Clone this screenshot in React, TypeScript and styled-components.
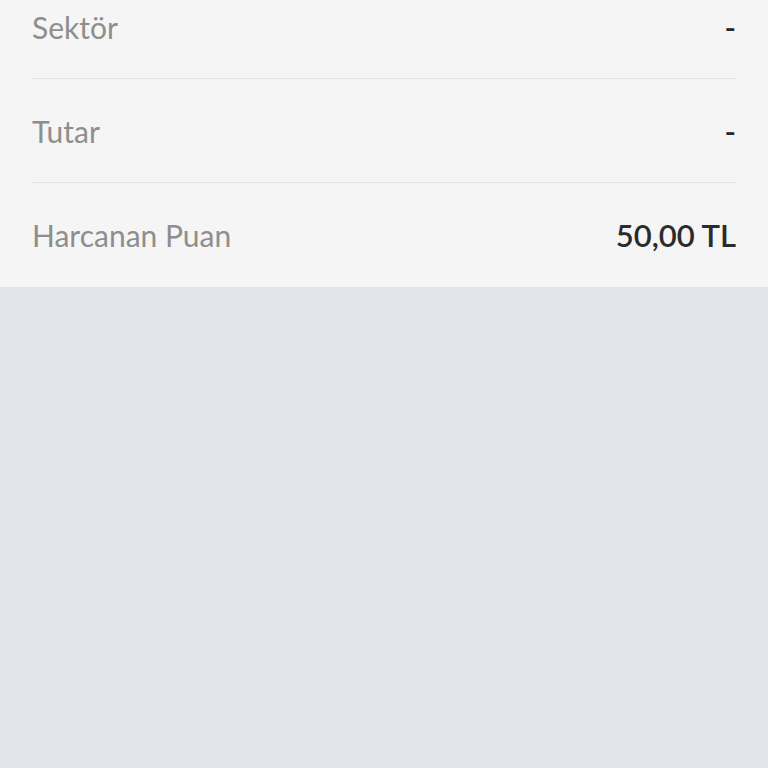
import styled, { createGlobalStyle } from "styled-components";

const GlobalStyle = createGlobalStyle`
  html, body {
    margin: 0;
    padding: 0;
    background-color: #e1e4e8;
  }
  body {
    font-family: Lato, "Open Sans", sans-serif;
  }
`;

const Page = styled.div`
  width: 768px;
  height: 768px;
  overflow: hidden;
  background-color: #e1e4e8;
`;

const DetailPanel = styled.div`
  background-color: #f5f5f5;
  padding: 0 32px;
  margin-top: -25px;
`;

const DetailRow = styled.div<{ $last?: boolean }>`
  display: flex;
  justify-content: space-between;
  align-items: center;
  height: ${({ $last }) => ($last ? "104px" : "103px")};
  border-bottom: ${({ $last }) => ($last ? "none" : "1px solid #e2e2e2")};
`;

const Label = styled.div`
  font: 400 30px Lato, sans-serif;
  color: #8e8e8e;
`;

const Value = styled.div`
  font: 600 31px Lato, sans-serif;
  color: #2b2b2b;
`;

const rows = [
  { label: "Sektör", value: "-" },
  { label: "Tutar", value: "-" },
  { label: "Harcanan Puan", value: "50,00 TL" },
];

export default function App() {
  return (
    <Page>
      <GlobalStyle />
      <DetailPanel>
        {rows.map((row, i) => (
          <DetailRow key={row.label} $last={i === rows.length - 1}>
            <Label>{row.label}</Label>
            <Value>{row.value}</Value>
          </DetailRow>
        ))}
      </DetailPanel>
    </Page>
  );
}
